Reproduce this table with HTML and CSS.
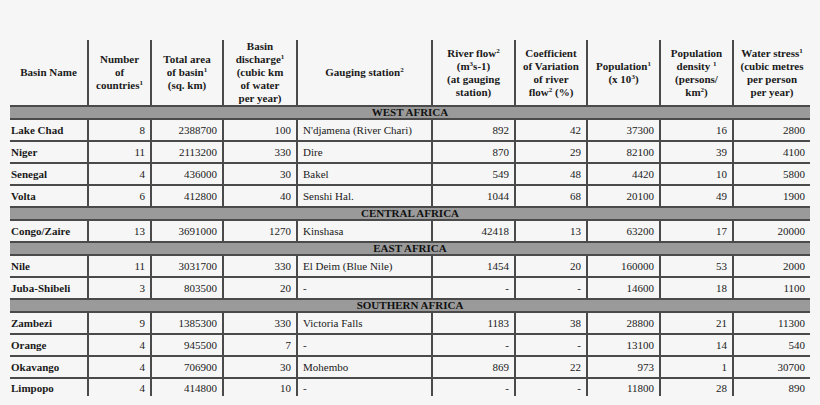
FILE: index.html
```html
<!DOCTYPE html>
<html>
<head>
<meta charset="utf-8">
<link rel="stylesheet" href="styles.css">
</head>
<body>
<table class="basins">
<colgroup>
<col class="c1"><col class="c2"><col class="c3"><col class="c4"><col class="c5"><col class="c6"><col class="c7"><col class="c8"><col class="c9"><col class="c10">
</colgroup>
<thead>
<tr class="head">
<th>Basin Name</th>
<th>Number<br>of<br>countries<sup>1</sup></th>
<th>Total area<br>of basin<sup>1</sup><br>(sq. km)</th>
<th>Basin<br>discharge<sup>1</sup><br>(cubic km<br>of water<br>per year)</th>
<th>Gauging station<sup>2</sup></th>
<th>River flow<sup>2</sup><br>(m<sup>3</sup>s-1)<br>(at gauging<br>station)</th>
<th>Coefficient<br>of Variation<br>of river<br>flow<sup>2</sup> (%)</th>
<th>Population<sup>1</sup><br>(x 10<sup>3</sup>)</th>
<th>Population<br>density <sup>1</sup><br>(persons/<br>km<sup>2</sup>)</th>
<th>Water stress<sup>1</sup><br>(cubic metres<br>per person<br>per year)</th>
</tr>
</thead>
<tbody>
<tr class="section"><td colspan="10">WEST AFRICA</td></tr>
<tr><td class="name">Lake Chad</td><td>8</td><td>2388700</td><td>100</td><td class="station">N'djamena (River Chari)</td><td>892</td><td>42</td><td>37300</td><td>16</td><td>2800</td></tr>
<tr><td class="name">Niger</td><td>11</td><td>2113200</td><td>330</td><td class="station">Dire</td><td>870</td><td>29</td><td>82100</td><td>39</td><td>4100</td></tr>
<tr><td class="name">Senegal</td><td>4</td><td>436000</td><td>30</td><td class="station">Bakel</td><td>549</td><td>48</td><td>4420</td><td>10</td><td>5800</td></tr>
<tr><td class="name">Volta</td><td>6</td><td>412800</td><td>40</td><td class="station">Senshi Hal.</td><td>1044</td><td>68</td><td>20100</td><td>49</td><td>1900</td></tr>
<tr class="section"><td colspan="10">CENTRAL AFRICA</td></tr>
<tr><td class="name">Congo/Zaire</td><td>13</td><td>3691000</td><td>1270</td><td class="station">Kinshasa</td><td>42418</td><td>13</td><td>63200</td><td>17</td><td>20000</td></tr>
<tr class="section"><td colspan="10">EAST AFRICA</td></tr>
<tr><td class="name">Nile</td><td>11</td><td>3031700</td><td>330</td><td class="station">El Deim (Blue Nile)</td><td>1454</td><td>20</td><td>160000</td><td>53</td><td>2000</td></tr>
<tr><td class="name">Juba-Shibeli</td><td>3</td><td>803500</td><td>20</td><td class="station">-</td><td>-</td><td>-</td><td>14600</td><td>18</td><td>1100</td></tr>
<tr class="section"><td colspan="10">SOUTHERN AFRICA</td></tr>
<tr><td class="name">Zambezi</td><td>9</td><td>1385300</td><td>330</td><td class="station">Victoria Falls</td><td>1183</td><td>38</td><td>28800</td><td>21</td><td>11300</td></tr>
<tr><td class="name">Orange</td><td>4</td><td>945500</td><td>7</td><td class="station">-</td><td>-</td><td>-</td><td>13100</td><td>14</td><td>540</td></tr>
<tr><td class="name">Okavango</td><td>4</td><td>706900</td><td>30</td><td class="station">Mohembo</td><td>869</td><td>22</td><td>973</td><td>1</td><td>30700</td></tr>
<tr class="last"><td class="name">Limpopo</td><td>4</td><td>414800</td><td>10</td><td class="station">-</td><td>-</td><td>-</td><td>11800</td><td>28</td><td>890</td></tr>
</tbody>
</table>
</body>
</html>
```
FILE: styles.css
```css
html, body {
  margin: 0;
  padding: 0;
  background: #f6f6f6;
}
body {
  padding: 40px 10px 0 10px;
  font-family: "Liberation Serif", "Times New Roman", serif;
  color: #1a1a1a;
}
.basins {
  width: 800px;
  table-layout: fixed;
  border-collapse: collapse;
  font-size: 11px;
}
.c1 { width: 78px; }
.c2 { width: 63px; }
.c3 { width: 72px; }
.c4 { width: 74px; }
.c5 { width: 135px; }
.c6 { width: 83px; }
.c7 { width: 72px; }
.c8 { width: 73px; }
.c9 { width: 73px; }
.c10 { width: 77px; }
.basins th, .basins td {
  padding: 0 5px;
  border: 2px solid #4a4a4a;
  border-top: none;
  border-bottom: none;
}
.basins th:first-child, .basins td:first-child { border-left: none; }
.basins th:last-child, .basins td:last-child { border-right: none; }
.head { height: 66px; }
.head th {
  font-weight: bold;
  line-height: 13px;
  text-align: center;
  vertical-align: middle;
  padding: 0 2px;
}
sup {
  font-size: 7px;
  line-height: 0;
  vertical-align: 4px;
}
.basins tbody tr { height: 22px; border-top: 2px solid #4a4a4a; }
.basins tbody td {
  text-align: right;
  vertical-align: middle;
  line-height: 14px;
}
.basins td.name {
  text-align: left;
  font-weight: bold;
  padding-left: 1px;
}
.basins td.station { text-align: left; }
.basins tr.section { height: 13px; }
.basins tr.section td {
  background: #9a9a9a;
  text-align: center;
  font-weight: bold;
  line-height: 11px;
  padding: 0;
  color: #111;
}
.basins tr.last { height: 18px; }
```
